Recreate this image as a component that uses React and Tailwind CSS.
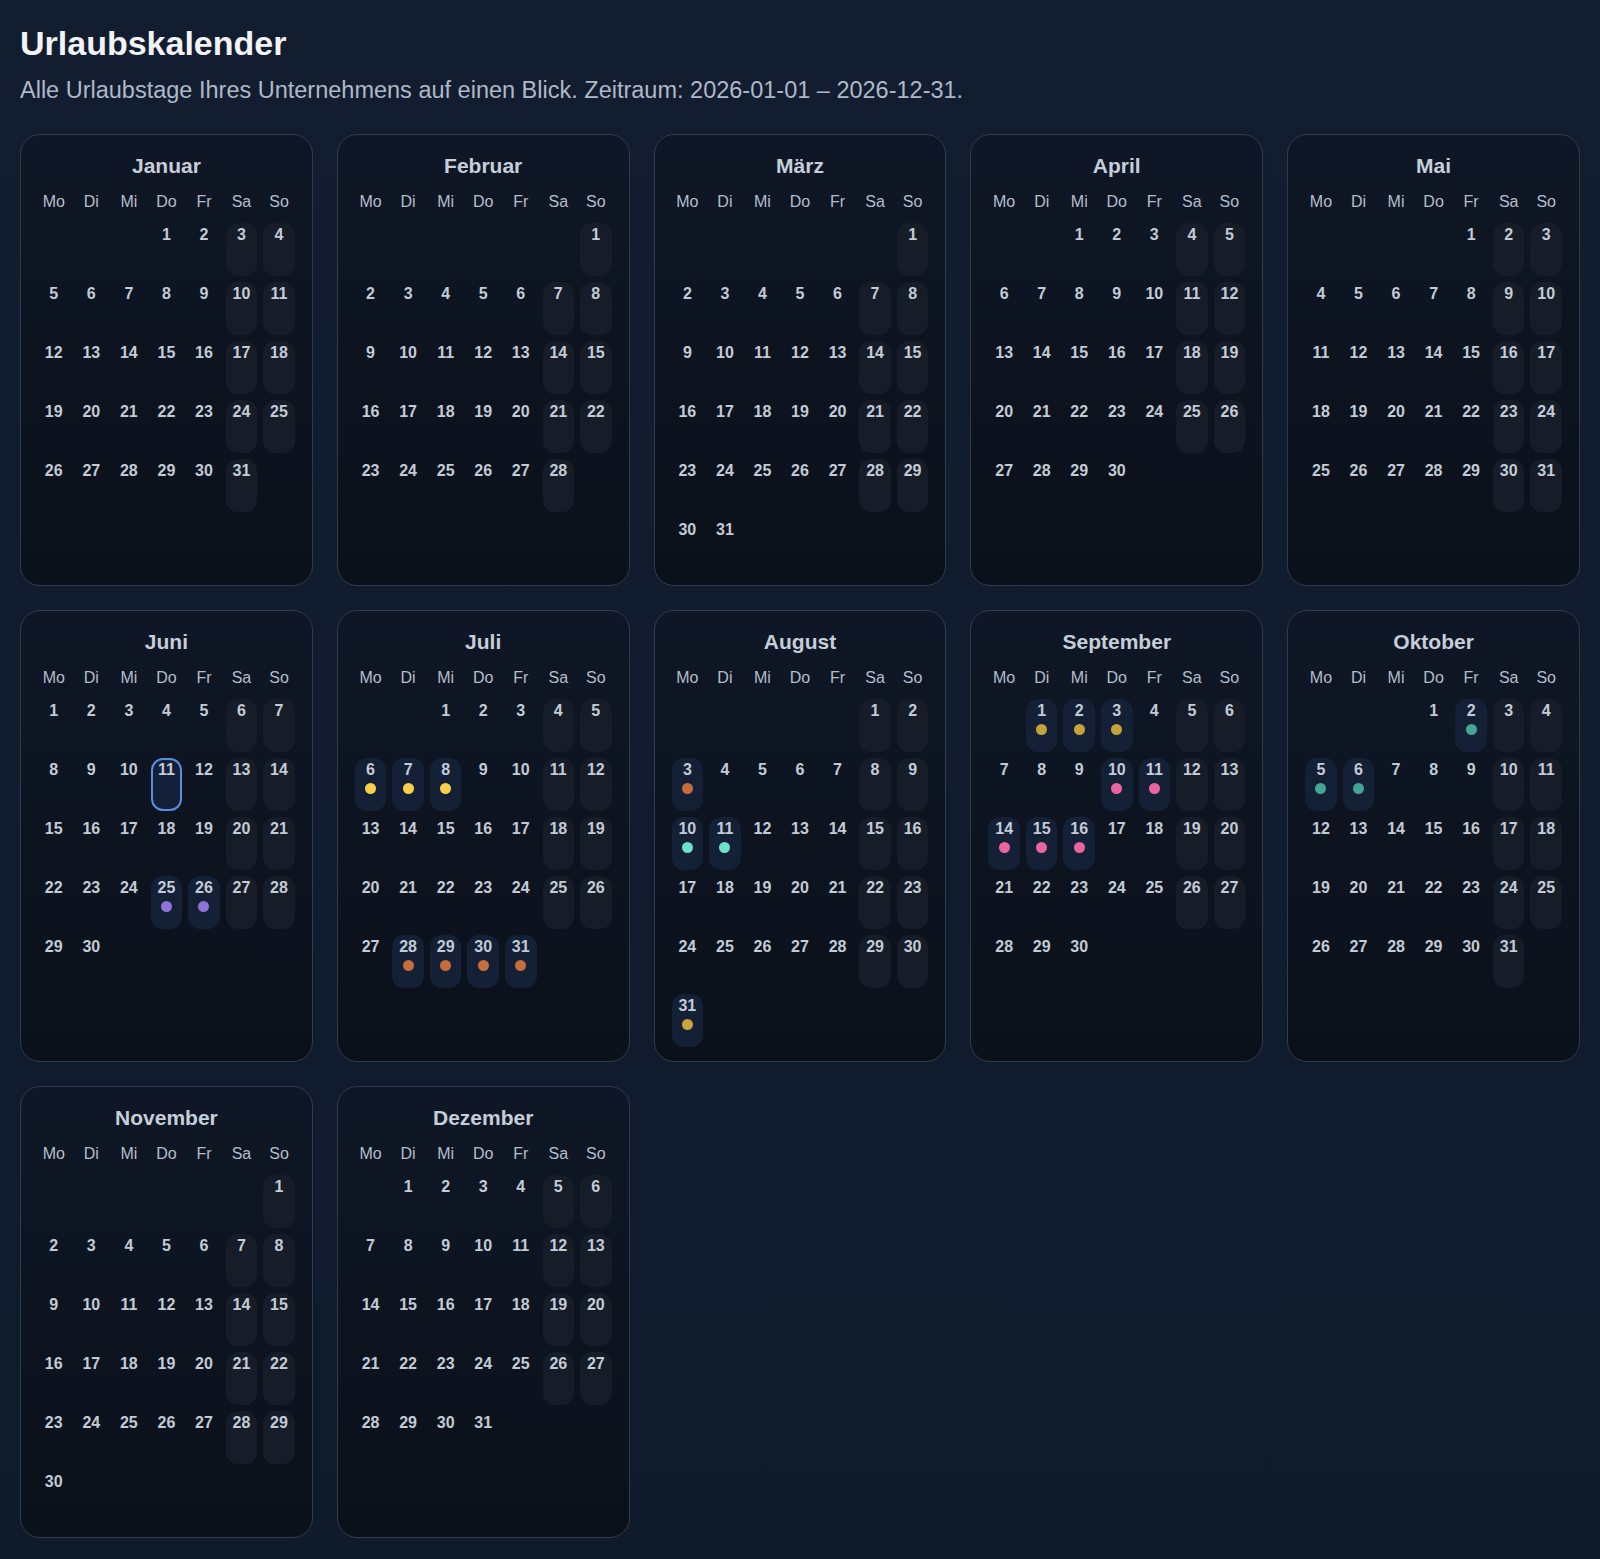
import React from "react";

const MONTHS = [
  "Januar",
  "Februar",
  "März",
  "April",
  "Mai",
  "Juni",
  "Juli",
  "August",
  "September",
  "Oktober",
  "November",
  "Dezember",
];

const WEEKDAYS = ["Mo", "Di", "Mi", "Do", "Fr", "Sa", "So"];

// month index -> { day: dotClass }
const EVENTS = {
  5: { 25: "bg-[#8f73d8]", 26: "bg-[#8f73d8]" },
  6: {
    6: "bg-[#f7cf48]",
    7: "bg-[#f7cf48]",
    8: "bg-[#f7cf48]",
    28: "bg-[#c66d3b]",
    29: "bg-[#c66d3b]",
    30: "bg-[#c66d3b]",
    31: "bg-[#c66d3b]",
  },
  7: {
    3: "bg-[#c66d3b]",
    10: "bg-[#6fe0c9]",
    11: "bg-[#6fe0c9]",
    31: "bg-[#c9a53e]",
  },
  8: {
    1: "bg-[#c4a33b]",
    2: "bg-[#c4a33b]",
    3: "bg-[#c4a33b]",
    10: "bg-[#ea65a0]",
    11: "bg-[#ea65a0]",
    14: "bg-[#ea65a0]",
    15: "bg-[#ea65a0]",
    16: "bg-[#ea65a0]",
  },
  9: { 2: "bg-[#45a594]", 5: "bg-[#45a594]", 6: "bg-[#45a594]" },
};

const TODAY = { m: 5, d: 11 };

function DayCell({ day, col, dot, today }) {
  const weekend = col >= 5;
  let cls = "h-[53px] rounded-xl flex flex-col items-center box-border ";
  if (today) {
    cls += "border-2 border-[#5b8fd9] bg-[#14203a]";
  } else if (dot) {
    cls += "bg-[#142036]";
  } else if (weekend) {
    cls += "bg-[#161d29]";
  }
  return (
    <div className={cls}>
      <span
        className={
          today
            ? "leading-6 -mt-[2px] text-base font-bold text-[#c3cbd6]"
            : "leading-6 text-base font-bold text-[#c3cbd6]"
        }
      >
        {day}
      </span>
      {dot && (
        <span className={"mt-[1px] w-[11px] h-[11px] rounded-full " + dot} />
      )}
    </div>
  );
}

function MonthCard({ m }) {
  const first = new Date(2026, m, 1).getDay();
  const offset = (first + 6) % 7;
  const days = new Date(2026, m + 1, 0).getDate();
  const cells = [];
  for (let i = 0; i < offset; i++) cells.push(null);
  for (let d = 1; d <= days; d++) cells.push(d);
  const ev = EVENTS[m] || {};
  return (
    <div className="rounded-[20px] border border-[#303b4b] bg-gradient-to-b from-[#0f1726] to-[#0b111a] px-[17px] pt-[17px] pb-[14px] flex flex-col">
      <div className="text-center text-[21px] leading-7 font-bold text-[#c6ced9]">
        {MONTHS[m]}
      </div>
      <div className="grid grid-cols-7 gap-x-1.5 mt-2.5">
        {WEEKDAYS.map((w) => (
          <div
            key={w}
            className="text-center text-base leading-6 text-[#b4becb]"
          >
            {w}
          </div>
        ))}
      </div>
      <div className="grid grid-cols-7 gap-1.5 mt-[9px]">
        {cells.map((d, i) =>
          d === null ? (
            <div key={"e" + i} className="h-[53px]" />
          ) : (
            <DayCell
              key={d}
              day={d}
              col={i % 7}
              dot={ev[d]}
              today={TODAY.m === m && TODAY.d === d}
            />
          )
        )}
      </div>
    </div>
  );
}

export default function App() {
  return (
    <div
      className="min-h-screen bg-gradient-to-b from-[#131d30] to-[#0f1a2b] px-5 pt-[23px] pb-5"
      style={{ fontFamily: '"Liberation Sans", Arial, sans-serif' }}
    >
      <h1 className="text-[34px] leading-[40px] font-bold text-[#f1f3f6]">
        Urlaubskalender
      </h1>
      <p className="mt-[11px] text-[23.5px] leading-8 text-[#aeb9c8]">
        Alle Urlaubstage Ihres Unternehmens auf einen Blick. Zeitraum:
        2026-01-01 – 2026-12-31.
      </p>
      <div className="grid grid-cols-5 gap-6 mt-[28px]">
        {MONTHS.map((_, m) => (
          <MonthCard key={m} m={m} />
        ))}
      </div>
    </div>
  );
}
